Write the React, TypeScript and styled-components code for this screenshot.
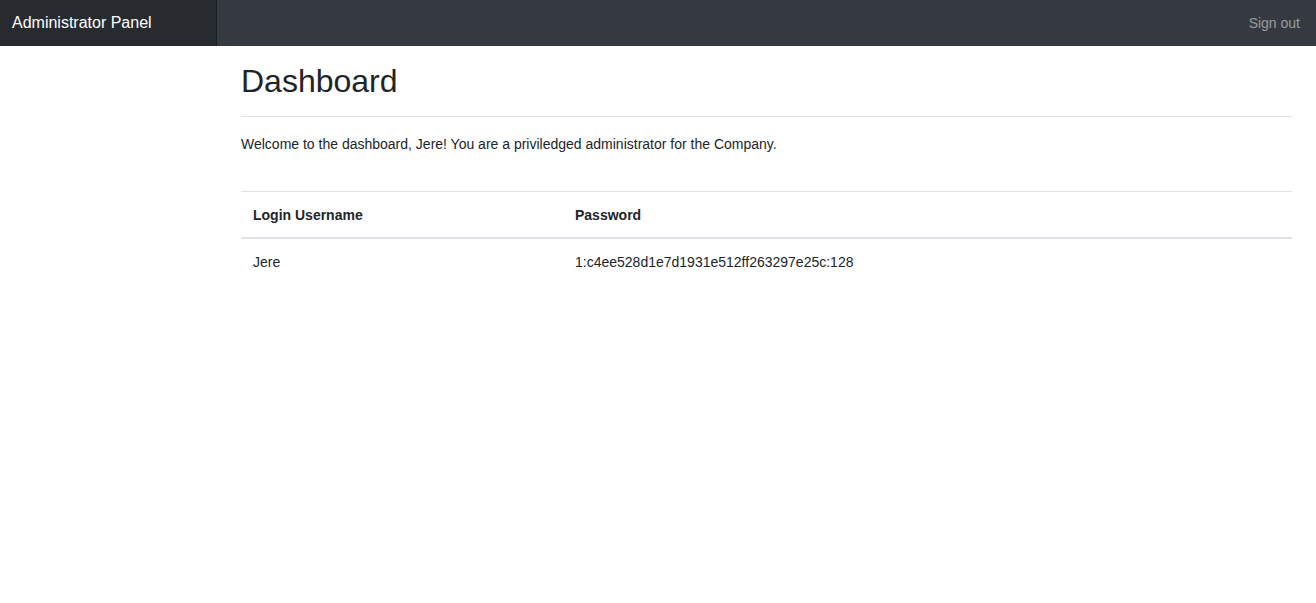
import React from "react";
import styled, { createGlobalStyle } from "styled-components";

const GlobalStyle = createGlobalStyle`
    * {
        box-sizing: border-box;
    }

    body {
        margin: 0;
        font-family: "Liberation Sans", Arial, sans-serif;
        font-size: 14px;
        line-height: 1.5;
        color: #212529;
        background-color: #fff;
    }
`;

const accounts = [
    { username: "Jere", password: "1:c4ee528d1e7d1931e512ff263297e25c:128" },
];

export default function App() {
    return (
        <>
            <GlobalStyle />
            <Navbar>
                <Brand href="#">Administrator Panel</Brand>
                <NavLink href="#">Sign out</NavLink>
            </Navbar>
            <Layout>
                <Sidebar />
                <Main>
                    <PageHeader>
                        <Title>Dashboard</Title>
                    </PageHeader>
                    <Welcome>
                        Welcome to the dashboard, Jere! You are a priviledged administrator for the Company.
                    </Welcome>
                    <Table>
                        <colgroup>
                            <col style={{ width: "322px" }} />
                            <col />
                        </colgroup>
                        <thead>
                            <tr>
                                <HeadCell>Login Username</HeadCell>
                                <HeadCell>Password</HeadCell>
                            </tr>
                        </thead>
                        <tbody>
                            {accounts.map((account) => (
                                <tr key={account.username}>
                                    <Cell>{account.username}</Cell>
                                    <Cell>{account.password}</Cell>
                                </tr>
                            ))}
                        </tbody>
                    </Table>
                </Main>
            </Layout>
        </>
    );
}

const Navbar = styled.nav`
    display: flex;
    align-items: stretch;
    justify-content: space-between;
    height: 46px;
    background-color: #343a40;
`;

const Brand = styled.a`
    display: flex;
    align-items: center;
    width: 217px;
    padding: 0 12px;
    font-size: 16px;
    color: #fff;
    text-decoration: none;
    background-color: rgba(0, 0, 0, 0.25);
    box-shadow: inset -1px 0 0 rgba(0, 0, 0, 0.25);
`;

const NavLink = styled.a`
    display: flex;
    align-items: center;
    padding: 0 16px;
    font-size: 14px;
    color: rgba(255, 255, 255, 0.5);
    text-decoration: none;
`;

const Layout = styled.div`
    display: flex;
`;

const Sidebar = styled.aside`
    flex: 0 0 217px;
`;

const Main = styled.main`
    flex: 1;
    padding: 16px 24px 0;
`;

const PageHeader = styled.div`
    display: flex;
    align-items: center;
    padding-bottom: 8px;
    margin-bottom: 16px;
    border-bottom: 1px solid #dee2e6;
`;

const Title = styled.h1`
    margin: 0 0 8px;
    font-size: 32px;
    font-weight: 500;
    line-height: 1.2;
`;

const Welcome = styled.p`
    margin: 0 0 36px;
    padding-top: 1px;
`;

const Table = styled.table`
    width: 100%;
    border-collapse: collapse;
    table-layout: fixed;
`;

const HeadCell = styled.th`
    padding: 13px 12px 11px;
    text-align: left;
    font-weight: 700;
    border-top: 1px solid #dee2e6;
    border-bottom: 2px solid #dee2e6;
`;

const Cell = styled.td`
    padding: 13px 12px 11px;
    border-top: 1px solid #dee2e6;
`;
